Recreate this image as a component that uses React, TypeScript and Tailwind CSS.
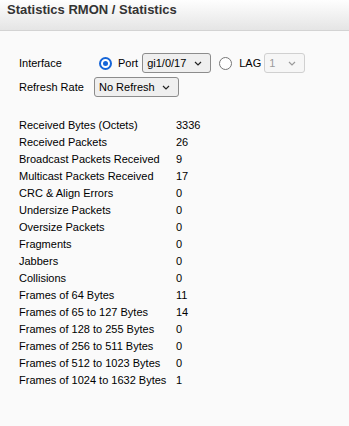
import React from "react";

const stats: [string, string][] = [
  ["Received Bytes (Octets)", "3336"],
  ["Received Packets", "26"],
  ["Broadcast Packets Received", "9"],
  ["Multicast Packets Received", "17"],
  ["CRC & Align Errors", "0"],
  ["Undersize Packets", "0"],
  ["Oversize Packets", "0"],
  ["Fragments", "0"],
  ["Jabbers", "0"],
  ["Collisions", "0"],
  ["Frames of 64 Bytes", "11"],
  ["Frames of 65 to 127 Bytes", "14"],
  ["Frames of 128 to 255 Bytes", "0"],
  ["Frames of 256 to 511 Bytes", "0"],
  ["Frames of 512 to 1023 Bytes", "0"],
  ["Frames of 1024 to 1632 Bytes", "1"],
];

const Chevron = ({ disabled }: { disabled?: boolean }) => (
  <svg width="8" height="5" viewBox="0 0 8 5" className="shrink-0">
    <polyline
      points="1,1 4,4 7,1"
      fill="none"
      stroke={disabled ? "#9a9a9a" : "#222"}
      strokeWidth="1.2"
    />
  </svg>
);

const Select = ({
  value,
  width,
  disabled,
}: {
  value: string;
  width: string;
  disabled?: boolean;
}) => (
  <div
    className={`flex h-[20px] items-center justify-between rounded-[3px] border pl-[4px] pr-[8px] ${width} ${
      disabled
        ? "border-[#d0d0d0] bg-[#f6f6f6] text-[#9a9a9a]"
        : "border-[#8c8c8c] bg-[#efefef] text-black"
    }`}
  >
    <span>{value}</span>
    <Chevron disabled={disabled} />
  </div>
);

const Radio = ({ checked }: { checked?: boolean }) =>
  checked ? (
    <span className="flex size-[13px] shrink-0 items-center justify-center rounded-full border-[2px] border-[#1565d8] bg-white">
      <span className="size-[5px] rounded-full bg-[#1565d8]" />
    </span>
  ) : (
    <span className="block size-[13px] shrink-0 rounded-full border-[1.5px] border-[#767676] bg-white" />
  );

export default function App() {
  return (
    <div className="min-h-[426px] bg-[#fafafa] font-['Liberation_Sans',Arial,sans-serif] text-[11px] text-black">
      {/* title bar */}
      <div className="h-[31px] border-b border-[#d3d3d3] bg-gradient-to-b from-[#fefefe] to-[#e5e5e5] px-[7px] pt-[1px] text-[13px] font-bold leading-[17px] text-[#333]">
        Statistics RMON / Statistics
      </div>

      <div className="pl-[19px] pt-[22px]">
        <div className="flex h-[20px] items-center">
          <span className="w-[75px]">Interface</span>
          <span className="ml-[5px]">
            <Radio checked />
          </span>
          <span className="ml-[6px]">Port</span>
          <span className="ml-[4px]">
            <Select value="gi1/0/17" width="w-[69px]" />
          </span>
          <span className="ml-[8px]">
            <Radio />
          </span>
          <span className="ml-[7px]">LAG</span>
          <span className="ml-[3px]">
            <Select value="1" width="w-[41px]" disabled />
          </span>
        </div>
        <div className="mt-[4px] flex h-[20px] items-center">
          <span className="w-[75px]">Refresh Rate</span>
          <Select value="No Refresh" width="w-[85px]" />
        </div>

        <div className="mt-[20px] grid grid-cols-[157px_auto] leading-[17px]">
          {stats.map(([label, value]) => (
            <React.Fragment key={label}>
              <span>{label}</span>
              <span>{value}</span>
            </React.Fragment>
          ))}
        </div>
      </div>
    </div>
  );
}
